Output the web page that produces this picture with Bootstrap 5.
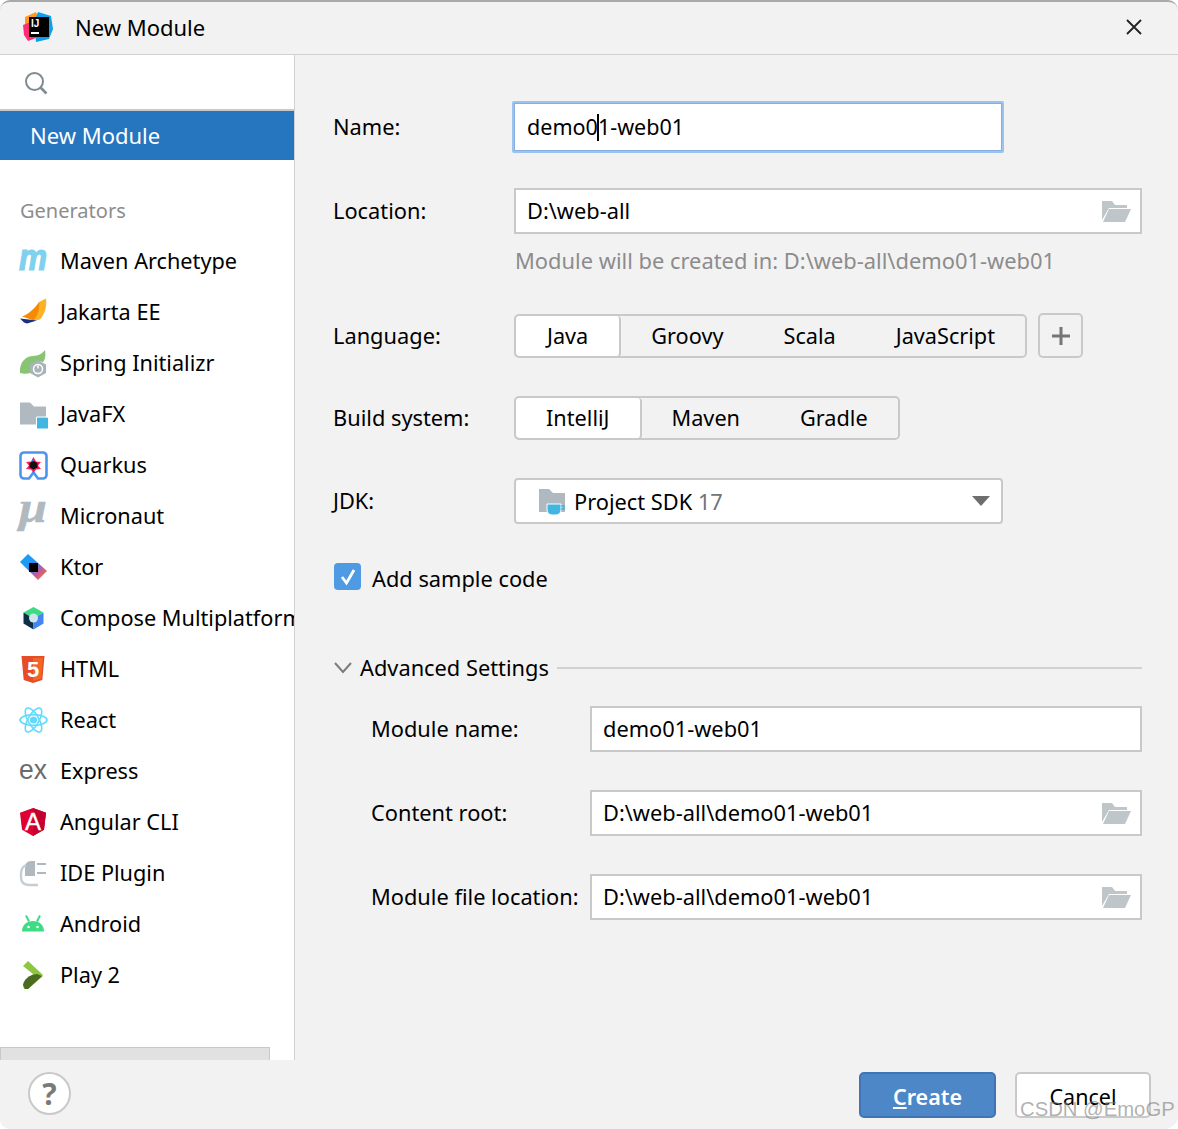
<!DOCTYPE html>
<html lang="en">
<head>
<meta charset="utf-8">
<title>New Module</title>
<link href="https://cdn.jsdelivr.net/npm/bootstrap@5.3.0/dist/css/bootstrap.min.css" rel="stylesheet">
<style>
html,body{height:100%;}
body{background:#fff;font-family:"Noto Sans","Open Sans",sans-serif;font-size:21.8px;color:#000;overflow:hidden;}
.dlg{position:relative;width:1178px;height:1129px;background:#f2f2f2;border-top:2px solid #a9a9a9;border-radius:10px 10px 14px 10px;overflow:hidden;display:flex;flex-direction:column;}
.ttl{height:53px;flex:none;border-bottom:1px solid #d1d1d1;padding:0 35px 2px 22px;font-size:22px;}
.ttl-name{margin-left:21px;line-height:1;}
.mid{flex:1;min-height:0;}
.side{width:295px;flex:none;background:#fff;border-right:1px solid #d1d1d1;height:1005px;overflow:hidden;position:relative;}
.srch{height:56px;border-bottom:2px solid #c9c9c9;padding:2px 0 0 24px;}
.sel{height:49px;background:#2675bf;color:#fff;padding-left:30px;margin-bottom:27px;font-size:22px;}
.gen{height:49px;color:#8c8c8c;padding:0 0 1px 20px;font-size:20px;}
.rw{height:51px;padding-left:19px;white-space:nowrap;font-size:21.7px;}
.ic{width:29px;height:29px;flex:none;margin-right:12px;display:block;overflow:visible;}
.hsb{position:absolute;left:0;bottom:0;width:270px;height:13px;background:#e1e1e1;border:1px solid #c9c9c9;border-bottom:0;}
.frm{flex:1;padding:46px 36px 0 39px;min-width:0;}
.fl{width:181px;flex:none;margin-left:-1px;}
.fl2{width:219px;flex:none;margin-left:37px;}
.inp{background:#fff;border:2px solid #c9c9c9;height:46px;padding:0 9px 0 11px;line-height:1;}
.r1{height:52px;margin-bottom:35px;}
.focus{width:492px;height:52px;margin-left:-2px;background:#fff;border:3px solid #9cc3ef;outline:1px solid #86aee0;outline-offset:-3px;padding-left:12px;border-radius:2px;font-size:21.55px;}
.caret{display:inline-block;width:2px;height:27px;background:#000;margin:0 -1px;vertical-align:-6px;}
.hint{color:#8c8c8c;margin:13px 0 0 181px;height:67px;line-height:28px;font-size:21.88px;}
.seg{border:2px solid #c9c9c9;border-radius:5px;height:44px;font-size:21.7px;}
.seg span{line-height:1;padding:0 30px;}
.seg .on{background:#fff;border-right:2px solid #c9c9c9;height:40px;border-radius:4px;margin:0;box-shadow:0 1px 0 #c9c9c9;display:flex;align-items:center;}
.seg .wide{padding:0 31px;}
.plus{width:45px;height:45px;border:2px solid #c9c9c9;border-radius:5px;margin-left:11px;margin-top:-1px;}
.jdk{width:489px;height:46px;background:#fff;border:2px solid #c9c9c9;border-radius:4px;padding:0 11px 0 22px;}
.jdk-txt{padding-top:2px;}
.tri{width:0;height:0;border-left:9px solid transparent;border-right:9px solid transparent;border-top:10px solid #6e6e6e;}
.cbx{width:27px;height:27px;background:#4e9be3;border-radius:4px;flex:none;margin:0 11px 5px 0;}
.line{flex:1;height:2px;background:#d1d1d1;margin-left:8px;}
.gap-a{margin-bottom:38px;}
.gap-b{margin-bottom:39px;}
.gap-c{margin-bottom:56px;}
.gap-d{margin-bottom:22px;}
.ftr{position:absolute;left:0;right:0;bottom:0;height:69px;background:#f2f2f2;}
.hlp{position:absolute;left:28px;top:12px;width:43px;height:43px;border:2px solid #c9c9c9;border-radius:50%;background:#fff;color:#7a7a7a;font-weight:700;font-size:30px;line-height:1;}
.btnc{position:absolute;top:12px;height:46px;border-radius:5px;font-size:21.5px;line-height:1;padding:3px 0 0;}
.bcr{left:859px;width:137px;background:#4d87c7;border:2px solid #3f75b3;color:#fff;font-weight:600;}
.bcn{left:1015px;width:136px;background:#fff;border:2px solid #c9c9c9;color:#000;}
.wm{position:absolute;left:1020px;top:1094px;font-family:"Liberation Sans",sans-serif;font-size:20.3px;color:rgba(125,125,125,.6);line-height:26px;white-space:nowrap;}
.cls{display:block;}
.fold{width:30px;height:24px;flex:none;}
</style>
</head>
<body>
<div class="dlg">
  <div class="ttl d-flex align-items-center justify-content-between">
    <div class="d-flex align-items-center">
      <svg width="32" height="32" viewBox="0 0 32 32"><path d="M3 6 14 1l3 8-8 8-6-3z" fill="#ff9a1f"/><path d="M1 14l8-3 5 16-8 3-4-6z" fill="#ff2d78"/><path d="M16 1l13 4 2 13-4 10-13 3-2-20z" fill="#0d9fe8"/><rect x="7" y="6" width="20" height="20" fill="#000"/><text x="9" y="16" font-family="Liberation Sans" font-weight="700" font-size="10" fill="#fff">IJ</text><rect x="9" y="21" width="8" height="2" fill="#fff"/></svg>
      <span class="ttl-name">New Module</span>
    </div>
    <svg class="cls" width="18" height="18" viewBox="0 0 18 18"><path d="M2 2l14 14M16 2 2 16" stroke="#222" stroke-width="1.8"/></svg>
  </div>
  <div class="mid d-flex">
    <div class="side">
      <div class="srch d-flex align-items-center">
        <svg width="24" height="24" viewBox="0 0 24 24" fill="none"><circle cx="10.5" cy="10.5" r="8.5" stroke="#7f8b91" stroke-width="2"/><path d="M16.5 16.5l6 6" stroke="#7f8b91" stroke-width="2.6"/></svg>
      </div>
      <div class="sel d-flex align-items-center">New Module</div>
      <div class="gen d-flex align-items-center">Generators</div>

      <div class="rw d-flex align-items-center"><svg class="ic" viewBox="0 0 29 29"><text x="0" y="23" font-family="Liberation Sans" font-style="italic" font-weight="700" font-size="36" fill="#7fd1ee" stroke="#7fd1ee" stroke-width="1.200" textLength="28" lengthAdjust="spacingAndGlyphs">m</text></svg>Maven Archetype</div>
      <div class="rw d-flex align-items-center"><svg class="ic" viewBox="0 0 29 29"><path d="M20 4 27 .5c1 8-1 15-6 21l-6 1c3-5 5-12 5-18.500z" fill="#fbb325"/><path d="M3 18.500C10 16 16 10 20 4c1 6-1 13-5 18.500z" fill="#f58a07"/><path d="M1 20.500l17 2-10 3-3-1z" fill="#1b2f7e"/></svg>Jakarta EE</div>
      <div class="rw d-flex align-items-center"><svg class="ic" viewBox="0 0 29 29"><path d="M1 24C0 13 7 7 14 7c5 0 10-3 12-6 1 6 0 10-2 12-8-2-12 3-13 11z" fill="#89c374"/><path d="M1 24c3 1 7 1 10 0v-8C6 15 3 18 1 24z" fill="#89c374"/><path d="M19 11l8 4.500V24l-8 4.500-8-4.500v-8.500z" fill="#a9b4ba"/><circle cx="19" cy="20" r="4.500" fill="none" stroke="#fff" stroke-width="1.500"/><path d="M19 16.500v3" stroke="#fff" stroke-width="1.500"/></svg>Spring Initializr</div>
      <div class="rw d-flex align-items-center"><svg class="ic" viewBox="0 0 29 29"><path d="M1 2.500h10l4 4h12v18H1z" fill="#afb9bf"/><rect x="18" y="17.500" width="11" height="11" fill="#40b6e0"/><path d="M17.500 29V17h11.500" fill="none" stroke="#fff"/></svg>JavaFX</div>
      <div class="rw d-flex align-items-center"><svg class="ic" viewBox="0 0 29 29"><path d="M10 27.500H5a3.500 3.500 0 0 1-3.500-3.500V5A3.500 3.500 0 0 1 5 1.500h19A3.500 3.500 0 0 1 27.500 5v19a3.500 3.500 0 0 1-3.500 3.500h-5l-4.500-6-4.500 6z" fill="#fff" stroke="#4b95ee" stroke-width="2.600"/><path d="M14.500 6l2.500 4.500 5 .5-3 3.500 3 3.500-5 .5-2.500 3.500-2.500-3.500-5-.5 3-3.500-3-3.500 5-.5z" fill="#ff1e5a"/><path d="M6.500 14.500h4.500l3.500-8.500v8.500z" fill="#2e7ce0"/><path d="M14.500 10l4 2v4.500l-4 2-4-2V12z" fill="#111"/></svg>Quarkus</div>
      <div class="rw d-flex align-items-center"><svg class="ic" viewBox="0 0 29 29"><text x="0" y="20" font-family="Liberation Serif" font-style="italic" font-weight="700" font-size="44" fill="#afb9bf" stroke="#afb9bf" stroke-width=".5" textLength="28" lengthAdjust="spacingAndGlyphs">μ</text></svg>Micronaut</div>
      <div class="rw d-flex align-items-center"><svg class="ic" viewBox="0 0 29 29"><defs><linearGradient id="kt" x1="0" y1="0" x2="1" y2="1"><stop offset="0" stop-color="#08a6ff"/><stop offset=".45" stop-color="#2f8ff0"/><stop offset=".7" stop-color="#c4589a"/><stop offset="1" stop-color="#ff8a00"/></linearGradient></defs><path d="M9 1l19 17-9 9L1 9z" fill="url(#kt)"/><rect x="10" y="10" width="9" height="9" fill="#000"/></svg>Ktor</div>
      <div class="rw d-flex align-items-center"><svg class="ic" viewBox="0 0 29 29"><path d="M14.500 3l10 5.500-10 6-10-6z" fill="#3ddc84"/><path d="M4.500 8.500v11l10 6V14.500z" fill="#0c2f47"/><path d="M24.500 8.500v11l-10 6V14.500z" fill="#4285f4"/><circle cx="14.500" cy="14" r="4.500" fill="#cfe6ec"/></svg>Compose Multiplatform</div>
      <div class="rw d-flex align-items-center"><svg class="ic" viewBox="0 0 29 29"><path d="M2.500 1h23l-2.200 24L14 28l-9.300-3z" fill="#e44d26"/><path d="M14 3v23l8-2.300L24 3z" fill="#f16529"/><text x="14" y="22" text-anchor="middle" font-family="Liberation Sans" font-weight="700" font-size="22" fill="#fff">5</text></svg>HTML</div>
      <div class="rw d-flex align-items-center"><svg class="ic" viewBox="0 0 29 29" fill="none" stroke="#61dafb" stroke-width="1.600"><circle cx="14.500" cy="14" r="2.800" fill="#61dafb"/><ellipse cx="14.500" cy="14" rx="13.500" ry="5.400"/><ellipse cx="14.500" cy="14" rx="13.500" ry="5.400" transform="rotate(60 14.500 14)"/><ellipse cx="14.500" cy="14" rx="13.500" ry="5.400" transform="rotate(120 14.500 14)"/></svg>React</div>
      <div class="rw d-flex align-items-center"><svg class="ic" viewBox="0 0 29 29"><text x="0" y="21.500" font-family="Liberation Sans" font-size="28" fill="#6b6b6b" textLength="28" lengthAdjust="spacingAndGlyphs">ex</text></svg>Express</div>
      <div class="rw d-flex align-items-center"><svg class="ic" viewBox="0 0 29 29"><path d="M14 0 1 4.700l2 17L14 28l11-6.300 2-17z" fill="#dd0031"/><path d="M14 0v28l11-6.300 2-17z" fill="#c3002f"/><text x="14" y="22" text-anchor="middle" font-family="Liberation Sans" font-size="24" fill="#fff" stroke="#fff" stroke-width=".4">A</text></svg>Angular CLI</div>
      <div class="rw d-flex align-items-center"><svg class="ic" viewBox="0 0 29 29" fill="none"><path d="M16 2h-4c-4 0-6 3-6 6v9h10z" fill="#afb9bf"/><path d="M18 5h9M18 14h9" stroke="#afb9bf" stroke-width="2"/><path d="M7 6C3 8 2 11 2 15v3c0 5 3 8 8 8h9" stroke="#c4ced3" stroke-width="2.400"/></svg>IDE Plugin</div>
      <div class="rw d-flex align-items-center"><svg class="ic" viewBox="0 0 29 29"><path d="M3 21.500c0-6.500 5-10.500 11-10.500s11 4 11 10.500z" fill="#3ddc84"/><path d="M7 5.500l3 6M21 5.500l-3 6" stroke="#3ddc84" stroke-width="2"/><circle cx="9.500" cy="17" r="1.300" fill="#fff"/><circle cx="18.500" cy="17" r="1.300" fill="#fff"/></svg>Android</div>
      <div class="rw d-flex align-items-center"><svg class="ic" viewBox="0 0 29 29"><path d="M4 5 9 0l14 13c1 1 1 2 0 3L9 28H5l-1-4 10-11z" fill="#8dc63f"/><path d="M4 24c1-6 6-10 14-11l5 2L9 28H6z" fill="#4b6b20"/></svg>Play 2</div>

      <div class="hsb"></div>
    </div>
    <div class="frm">
      <div class="d-flex align-items-center r1"><div class="fl">Name:</div><div class="focus d-flex align-items-center"><span>demo0<span class="caret"></span>1-web01</span></div></div>
      <div class="d-flex align-items-center"><div class="fl">Location:</div><div class="inp flex-fill d-flex align-items-center justify-content-between">D:\web-all<svg class="fold" viewBox="0 0 30 24"><path d="M1 2h10l3 4h12v3H8L1 21z" fill="#bfc6ca"/><path d="M8 10h22l-6 13H2z" fill="#bfc6ca"/></svg></div></div>
      <div class="hint">Module will be created in: D:\web-all\demo01-web01</div>
      <div class="d-flex align-items-center gap-a"><div class="fl">Language:</div><div class="seg d-flex align-items-center"><span class="on wide">Java</span><span>Groovy</span><span>Scala</span><span>JavaScript</span></div><div class="plus d-flex align-items-center justify-content-center"><svg width="20" height="20" viewBox="0 0 20 20"><path d="M10 1v18M1 10h18" stroke="#757575" stroke-width="3"/></svg></div></div>
      <div class="d-flex align-items-center gap-a"><div class="fl">Build system:</div><div class="seg d-flex align-items-center"><span class="on">IntelliJ</span><span>Maven</span><span>Gradle</span></div></div>
      <div class="d-flex align-items-center gap-b"><div class="fl">JDK:</div><div class="jdk d-flex align-items-center justify-content-between"><span class="d-flex align-items-center jdk-txt"><svg class="me-2" width="28" height="28" viewBox="0 0 28 28"><path d="M1 1h10l4 4h12v19H1z" fill="#afb9bf"/><path d="M9 16h14v6a5 5 0 0 1-5 5h-4a5 5 0 0 1-5-5z" fill="#40b6e0" stroke="#fff" stroke-width="1"/><path d="M23 18h3v3h-3" fill="none" stroke="#40b6e0" stroke-width="1.500"/></svg>Project SDK&nbsp;<span class="text-secondary">17</span></span><span class="tri"></span></div></div>
      <div class="d-flex align-items-center gap-c"><div class="cbx d-flex align-items-center justify-content-center"><svg width="18" height="18" viewBox="0 0 18 18"><path d="M3 9l4.500 6L15 2" fill="none" stroke="#fff" stroke-width="2.800"/></svg></div>Add sample code</div>
      <div class="d-flex align-items-center gap-d"><svg class="me-2" width="18" height="12" viewBox="0 0 18 12"><path d="M1 1l8 9 8-9" fill="none" stroke="#7c7c7c" stroke-width="2"/></svg>Advanced Settings<div class="line"></div></div>
      <div class="d-flex align-items-center gap-a"><div class="fl2">Module name:</div><div class="inp flex-fill d-flex align-items-center">demo01-web01</div></div>
      <div class="d-flex align-items-center gap-a"><div class="fl2">Content root:</div><div class="inp flex-fill d-flex align-items-center justify-content-between">D:\web-all\demo01-web01<svg class="fold" viewBox="0 0 30 24"><path d="M1 2h10l3 4h12v3H8L1 21z" fill="#bfc6ca"/><path d="M8 10h22l-6 13H2z" fill="#bfc6ca"/></svg></div></div>
      <div class="d-flex align-items-center"><div class="fl2">Module file location:</div><div class="inp flex-fill d-flex align-items-center justify-content-between">D:\web-all\demo01-web01<svg class="fold" viewBox="0 0 30 24"><path d="M1 2h10l3 4h12v3H8L1 21z" fill="#bfc6ca"/><path d="M8 10h22l-6 13H2z" fill="#bfc6ca"/></svg></div></div>
    </div>
  </div>
  <div class="ftr">
    <div class="hlp d-flex align-items-center justify-content-center">?</div>
    <button class="btn btnc bcr" type="button"><u>C</u>reate</button>
    <button class="btn btnc bcn" type="button">Cancel</button>
  </div>
  <div class="wm">CSDN @EmoGP</div>
</div>
<script src="https://cdn.jsdelivr.net/npm/bootstrap@5.3.0/dist/js/bootstrap.bundle.min.js"></script>
</body>
</html>
